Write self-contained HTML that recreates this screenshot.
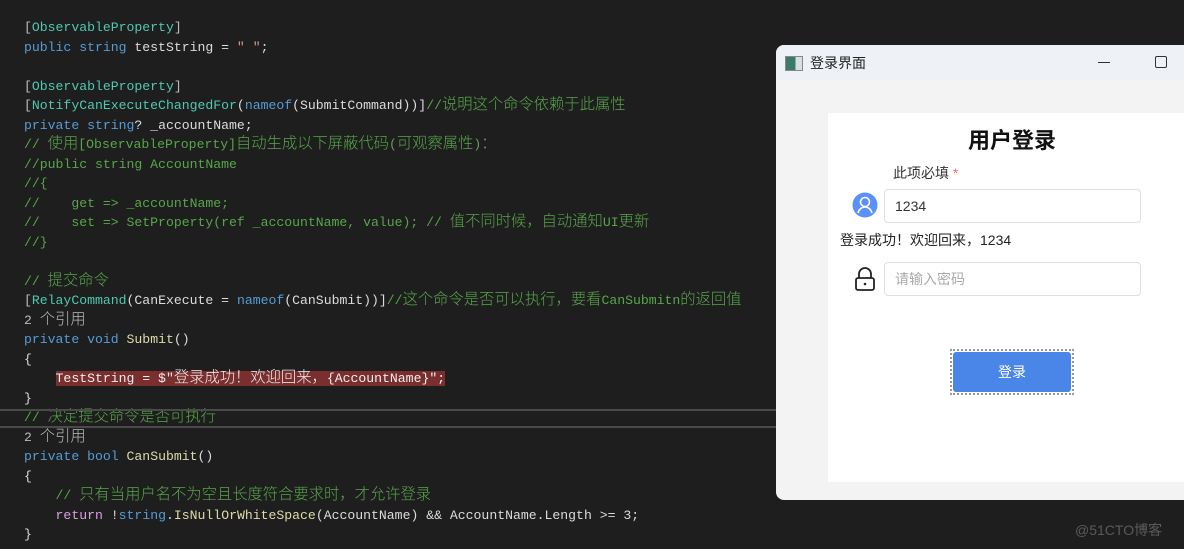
<!DOCTYPE html>
<html><head><meta charset="utf-8"><style>
body{margin:0;width:1184px;height:549px;background:#1e1e1e;overflow:hidden;position:relative;font-family:"Liberation Sans","Noto Sans CJK SC",sans-serif}
.code{position:absolute;left:24px;top:18px;font-family:"Liberation Mono","Noto Sans CJK SC",monospace;font-size:13.15px;line-height:19.5px;color:#dcdcdc;white-space:pre}
.z{font-size:15.3px;line-height:10px;font-weight:300}
.k{color:#569cd6}.t{color:#4ec9b0}.c{color:#57a64a}.s{color:#d69d85}.m{color:#dcdcaa}.p{color:#d8a0df}.g{color:#bbbbbb}
.hl{background:#7a2e2e;color:#f0f0f0}
.sep{position:absolute;left:0;width:776px;height:2px;background:#4a4a4a}
.win{position:absolute;left:776px;top:45px;width:420px;height:455px;background:#f3f3f3;border-radius:8px;overflow:hidden}
.tb{height:35px;background:#eef2f7;position:relative;font-size:14px;color:#222}
.card{position:absolute;left:52px;top:68px;width:380px;height:369px;background:#fff}
.inp{position:absolute;left:56px;width:257px;height:34px;border:1px solid #dcdfe6;border-radius:4px;background:#fff;font-size:14px;line-height:32px;padding-left:10px;box-sizing:border-box}
</style></head><body>
<div class="code"><span class="g">[</span><span class="t">ObservableProperty</span><span class="g">]</span>
<span class="k">public string</span> testString = <span class="s">" "</span>;

<span class="g">[</span><span class="t">ObservableProperty</span><span class="g">]</span>
<span class="g">[</span><span class="t">NotifyCanExecuteChangedFor</span>(<span class="k">nameof</span>(SubmitCommand))]<span class="c">//<span class="z">说明这个命令依赖于此属性</span></span>
<span class="k">private string</span>? _accountName;
<span class="c">// <span class="z">使用</span>[ObservableProperty]<span class="z">自动生成以下屏蔽代码</span>(<span class="z">可观察属性</span>)<span class="z">：</span></span>
<span class="c">//public string AccountName</span>
<span class="c">//{</span>
<span class="c">//    get =&gt; _accountName;</span>
<span class="c">//    set =&gt; SetProperty(ref _accountName, value); // <span class="z">值不同时候，自动通知</span>UI<span class="z">更新</span></span>
<span class="c">//}</span>

<span class="c">// <span class="z">提交命令</span></span>
<span class="g">[</span><span class="t">RelayCommand</span>(CanExecute = <span class="k">nameof</span>(CanSubmit))]<span class="c">//<span class="z">这个命令是否可以执行，要看</span>CanSubmitn<span class="z">的返回值</span></span>
<span class="g">2 <span class="z">个引用</span></span>
<span class="k">private void</span> <span class="m">Submit</span>()
{
    <span class="hl">TestString = $"<span class="z">登录成功！欢迎回来，</span>{AccountName}";</span>
}
<span class="c">// <span class="z">决定提交命令是否可执行</span></span>
<span class="g">2 <span class="z">个引用</span></span>
<span class="k">private bool</span> <span class="m">CanSubmit</span>()
{
    <span class="c">// <span class="z">只有当用户名不为空且长度符合要求时，才允许登录</span></span>
    <span class="p">return</span> !<span class="k">string</span>.<span class="m">IsNullOrWhiteSpace</span>(AccountName) &amp;&amp; AccountName.Length &gt;= 3;
}</div>
<div class="sep" style="top:409px"></div>
<div class="sep" style="top:426px"></div>
<div class="win">
 <div class="tb">
  <div style="position:absolute;left:9px;top:11px;width:16px;height:13px;border:1px solid #888;background:linear-gradient(90deg,#3a7a6a 60%,#ddd 60%)"></div>
  <div style="position:absolute;left:34px;top:8px">登录界面</div>
  <div style="position:absolute;left:322px;top:17px;width:12px;height:1px;background:#333"></div>
  <div style="position:absolute;left:379px;top:11px;width:10px;height:10px;border:1.5px solid #333;border-radius:2px"></div>
 </div>
 <div class="card">
  <div style="position:absolute;left:0;width:368px;top:10px;text-align:center;font-size:22px;font-weight:bold;color:#111">用户登录</div>
  <div style="position:absolute;left:65px;top:50px;font-size:14px;color:#333">此项必填 <span style="color:#f56c6c">*</span></div>
  <svg style="position:absolute;left:24px;top:79px" width="26" height="26" viewBox="0 0 26 26"><circle cx="13" cy="13" r="12.5" fill="#5b8ff9"/><circle cx="13" cy="10" r="4.5" fill="none" stroke="#fff" stroke-width="1.6"/><path d="M6 21c1-4 4-6 7-6s6 2 7 6" fill="none" stroke="#fff" stroke-width="1.6"/></svg>
  <div class="inp" style="top:76px;color:#333">1234</div>
  <div style="position:absolute;left:12px;top:117px;font-size:14px;color:#222">登录成功！欢迎回来，1234</div>
  <svg style="position:absolute;left:26px;top:154px" width="22" height="24" viewBox="0 0 22 24"><path d="M5 11V7a6 6 0 0 1 12 0v4" fill="none" stroke="#222" stroke-width="1.8"/><rect x="2" y="11" width="18" height="12" rx="2" fill="none" stroke="#222" stroke-width="1.8"/><circle cx="11" cy="17" r="1.3" fill="#222"/></svg>
  <div class="inp" style="top:149px;color:#aaa">请输入密码</div>
  <div style="position:absolute;left:122px;top:236px;width:124px;height:46px;border:2px dotted #999;box-sizing:border-box;padding:1px">
   <div style="background:#4a86e8;border-radius:3px;height:100%;color:#fff;text-align:center;line-height:40px;font-size:14px">登录</div>
  </div>
 </div>
</div>
<div style="position:absolute;left:1075px;top:520px;font-size:14px;color:#5a5a5a">@51CTO博客</div>
</body></html>
